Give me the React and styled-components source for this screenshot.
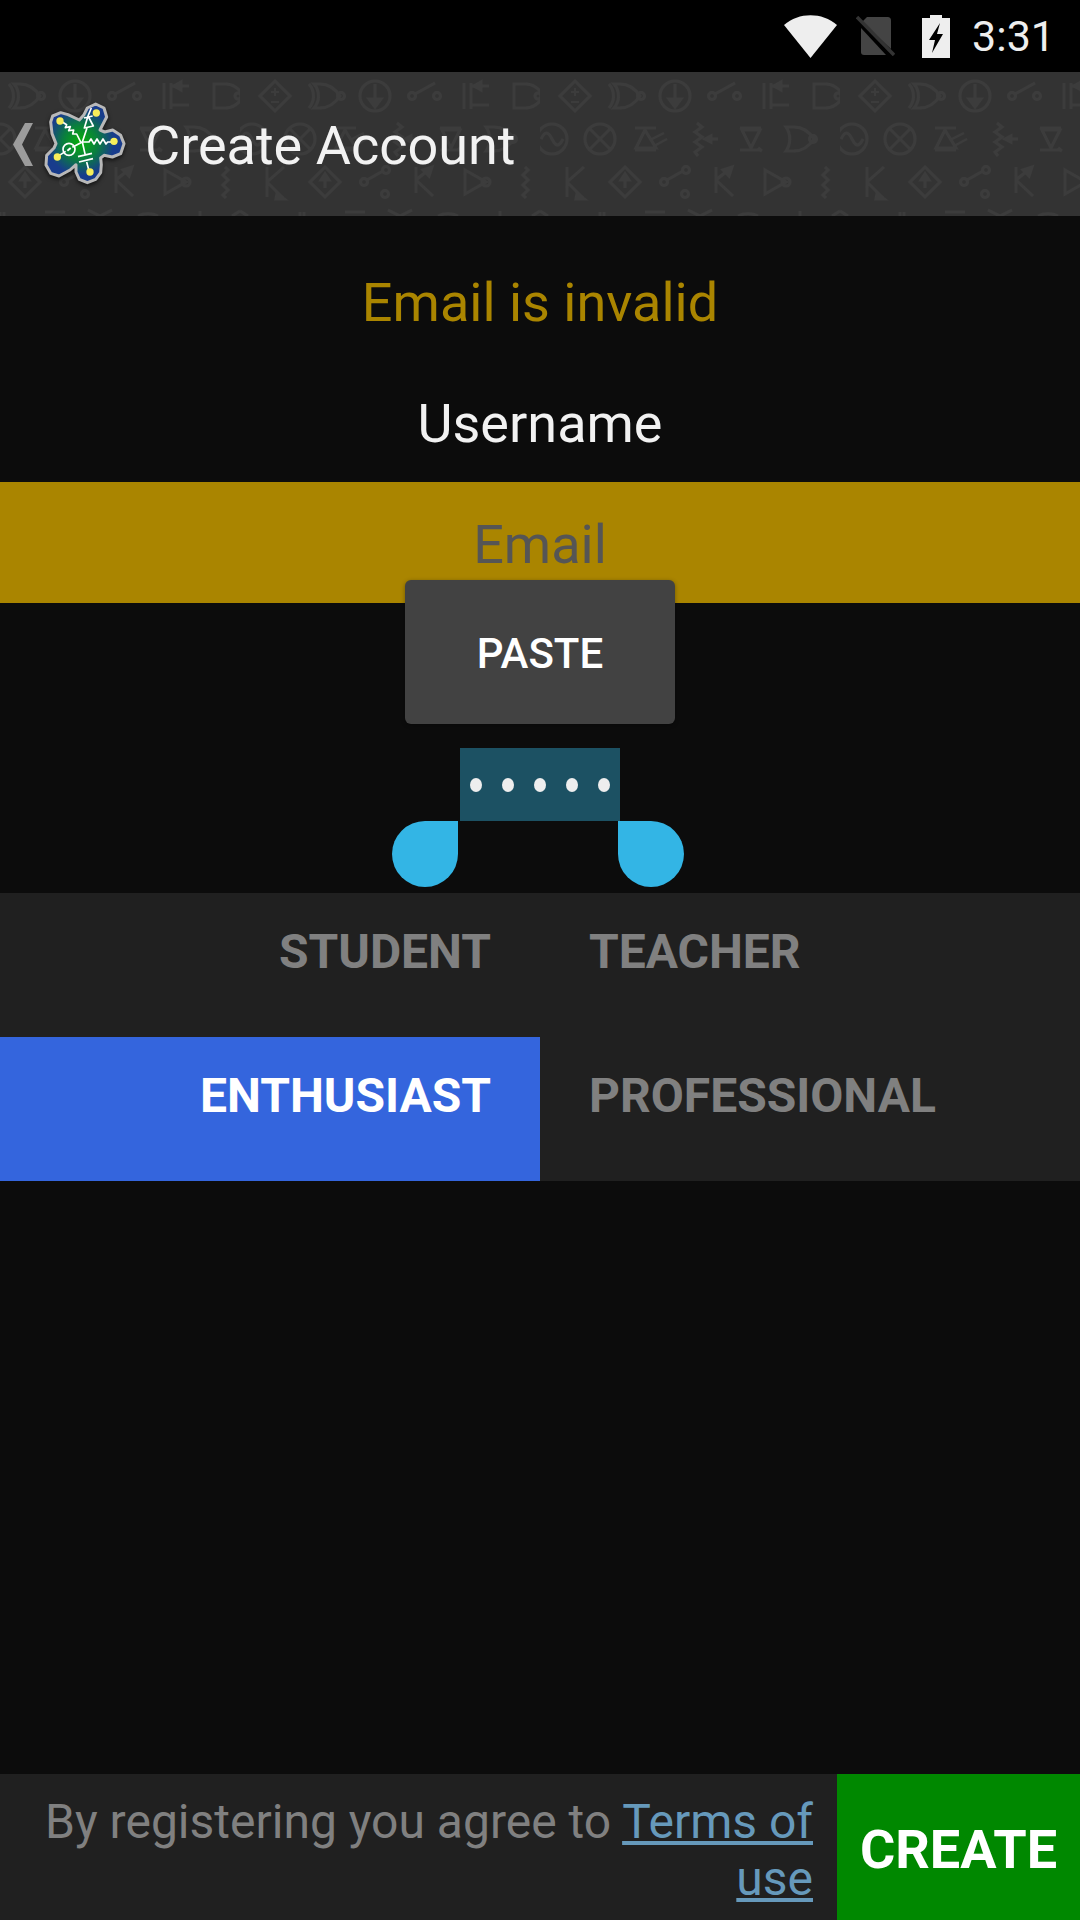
import React from "react";
import styled, { createGlobalStyle } from "styled-components";

const GlobalStyle = createGlobalStyle`
  html, body {
    margin: 0;
    padding: 0;
    background: #0c0c0c;
    font-family: Roboto, "Liberation Sans", sans-serif;
  }
`;

const Screen = styled.div`
  width: 1080px;
  height: 1920px;
  display: flex;
  flex-direction: column;
  overflow: hidden;
  background: #0c0c0c;
`;

const StatusBar = styled.div`
  height: 72px;
  flex: none;
  background: #000;
  display: flex;
  align-items: center;
  justify-content: flex-end;
  padding-right: 25px;
  color: #eee;
`;

const StatusIcon = styled.svg`
  display: block;
  flex: none;
  margin-right: ${(p) => p.$gap}px;
`;

const Clock = styled.span`
  font-size: 43px;
  line-height: 72px;
  color: #eee;
`;

const ToolBar = styled.div`
  position: relative;
  height: 144px;
  flex: none;
  background: #333;
  display: flex;
  align-items: center;
  padding-left: 13px;
  overflow: hidden;
`;

const Pattern = styled.svg`
  position: absolute;
  inset: 0;
`;

const Back = styled.svg`
  position: relative;
  flex: none;
`;

const Logo = styled.svg`
  position: relative;
  flex: none;
  margin-left: 11px;
  filter: drop-shadow(0 2px 2px rgba(0, 0, 0, 0.65));
`;

const Title = styled.h1`
  position: relative;
  margin: 3px 0 0 19px;
  font-size: 54px;
  font-weight: 400;
  color: #f2f2f2;
`;

const Form = styled.div`
  position: relative;
  flex: none;
  padding-bottom: 48px;
`;

const ErrorText = styled.div`
  height: 145px;
  box-sizing: border-box;
  padding-top: 57px;
  text-align: center;
  font-size: 54px;
  line-height: 60px;
  color: #aa8500;
`;

const Field = styled.div`
  height: 121px;
  box-sizing: border-box;
  padding-top: ${(p) => (p.$text ? 3 : 0)}px;
  display: flex;
  align-items: center;
  justify-content: center;
  font-size: 54px;
  color: ${(p) => (p.$invalid ? "#555" : "#f2f2f2")};
  background: ${(p) => (p.$invalid ? "#aa8500" : "transparent")};
`;

const Selection = styled.div`
  display: flex;
  gap: 20px;
  align-items: center;
  padding: 0 10px;
  height: 73px;
  background: #1c5163;
`;

const Dot = styled.span`
  width: 12px;
  height: 14px;
  border-radius: 50%;
  background: #eee;
`;

const PastePopup = styled.div`
  position: absolute;
  left: 405px;
  top: 364px;
  width: 270px;
  height: 144px;
  box-sizing: border-box;
  padding-top: 2px;
  display: flex;
  align-items: center;
  justify-content: center;
  border-radius: 6px;
  background: #424242;
  box-shadow: 0 1px 4px rgba(0, 0, 0, 0.35);
  color: #fff;
  font-size: 42px;
  font-weight: 500;
`;

const Handle = styled.div`
  position: absolute;
  top: 605px;
  left: ${(p) => (p.$right ? 618 : 392)}px;
  width: 66px;
  height: 66px;
  background: #33b5e5;
  border-radius: ${(p) => (p.$right ? "0 50% 50% 50%" : "50% 0 50% 50%")};
`;

const Levels = styled.div`
  flex: none;
  display: grid;
  grid-template-columns: 1fr 1fr;
  grid-auto-rows: 144px;
  background: #202020;
`;

const Level = styled.div`
  display: flex;
  align-items: center;
  justify-content: ${(p) => (p.$left ? "flex-end" : "flex-start")};
  padding: 0 49px 27px;
  font-size: 48px;
  font-weight: 700;
  color: ${(p) => (p.$active ? "#fff" : "#808080")};
  background: ${(p) => (p.$active ? "#3465dd" : "transparent")};
`;

const Spacer = styled.div`
  flex: 1;
`;

const Footer = styled.div`
  height: 146px;
  flex: none;
  display: flex;
  background: #202020;
`;

const Terms = styled.div`
  flex: 1;
  padding: 19px 24px 0 40px;
  text-align: right;
  font-size: 48px;
  line-height: 57px;
  color: #808080;
`;

const TermsLink = styled.a`
  color: #6699bb;
  text-decoration: underline;
`;

const CreateButton = styled.div`
  width: 243px;
  flex: none;
  box-sizing: border-box;
  padding-top: 4px;
  display: flex;
  align-items: center;
  justify-content: center;
  background: #008800;
  color: #fff;
  font-size: 54px;
  font-weight: 700;
`;

const ToolbarPattern = () => (
  <Pattern width="1080" height="144">
    <defs>
      <pattern id="circuits" patternUnits="userSpaceOnUse" x="540" y="0" width="300" height="144">
        <g fill="none" stroke="#3c3c3c" strokeWidth="3">
          {/* row 1 */}
          <path d="M35 9l15 15-15 15-15-15z" />
          <path d="M31 20h8M35 16v8M31 30h8" strokeWidth="2" />
          <path d="M69 12c6 7 6 17 0 24M74 12h6c10 0 16 6 20 12-4 6-10 12-20 12h-6c6-7 6-17 0-24z" />
          <circle cx="101" cy="24" r="3.5" />
          <circle cx="135" cy="24" r="15" />
          <path d="M135 12v22" />
          <path d="M129 27h12l-6 8z" fill="#3c3c3c" />
          <circle cx="172" cy="24" r="3.5" />
          <circle cx="197" cy="24" r="3.5" />
          <path d="M175 22l20-11" />
          <path d="M224 11v26M231 11v26M231 14h18M231 33h18M238 14h10" />
          <path d="M241 10l-7 4 7 4z" fill="#3c3c3c" />
          <path d="M274 12h12c9 0 14 6 18 12-4 6-9 12-18 12h-12z" />
          <circle cx="298" cy="24" r="3" />
          {/* row 2 */}
          <circle cx="12" cy="67" r="15" />
          <path d="M1 67c4-8 7-8 11 0s7 8 11 0" />
          <circle cx="60" cy="67" r="15" />
          <path d="M50 57l20 20M70 57l-20 20" />
          <path d="M95 56h21M95 78h21M105 58l-9 18h20z" />
          <path d="M110 68l14-7M114 74l13-7" strokeWidth="2" />
          <path d="M157 51l5 4-7 5 7 5-7 5 7 5-7 5 3 4" />
          <path d="M178 67h-12" />
          <path d="M165 67l6-3v6z" fill="#3c3c3c" />
          <path d="M200 56h21M200 78h21M202 58l9 18 9-18z" />
          <path d="M218 76l4 3" />
          <path d="M246 55h8c9 0 16 6 20 12-4 6-11 12-20 12h-8c5-7 5-17 0-24z" />
          <circle cx="273" cy="67" r="3.5" />
          {/* row 3 */}
          <path d="M27 95v30M27 110l17-15M27 110l16 16" />
          <path d="M37 122l7 5-8 0z" fill="#3c3c3c" />
          <path d="M85 95l15 15-15 15-15-15z" />
          <path d="M85 103v13" />
          <path d="M81 108l4-6 4 6z" fill="#3c3c3c" />
          <circle cx="124" cy="110" r="3.5" />
          <circle cx="146" cy="98" r="3.5" />
          <circle cx="145" cy="122" r="3.5" />
          <path d="M127 108l16-9" />
          <path d="M176 95v26M176 108l16-13M176 108l17 16" />
          <path d="M183 98l9-3-3 9z" fill="#3c3c3c" />
          <path d="M225 98l21 12-21 12z" />
          <circle cx="246" cy="110" r="4" />
          <path d="M285 95l3 3-5 5 5 5-5 5 5 5-5 5 3 3" />
          {/* row 4, cut by the bar */}
          <path d="M0 139l8 5M60 140v4M64 140v4M105 140h20M148 138l12 6M172 138l-12 6M198 144c6-3 14-3 20 0M260 139v5M300 139l-8 5" />
        </g>
      </pattern>
    </defs>
    <rect width="1080" height="144" fill="url(#circuits)" />
  </Pattern>
);

const AppLogo = () => (
  <Logo width="82" height="84" viewBox="130 40 246 252">
    <defs>
      <radialGradient id="board" gradientUnits="userSpaceOnUse" cx="240" cy="160" r="118">
        <stop offset="0" stopColor="#08b008" />
        <stop offset="0.45" stopColor="#0a7d40" />
        <stop offset="0.85" stopColor="#183c8c" />
      </radialGradient>
    </defs>
    <path
      d="M150 100L156 82L180 72L202 78L236 94L250 78L260 58L285 46L310 58L318 85L304 112L298 124L312 130L336 124L360 140L370 165L360 195L335 205L310 200L300 208L302 228L300 252L285 272L260 282L236 272L226 250L226 228L208 244L175 262L150 254L136 229L138 200L160 178L166 165L154 135Z"
      fill="url(#board)"
      stroke="#b8b8b8"
      strokeWidth="9"
      strokeLinejoin="round"
    />
    <g fill="none" stroke="#fff" strokeWidth="5" strokeLinejoin="round">
      <path d="M185 100l13 8-4 9 15-3-5 12 15-2-3 12 12 0 12 24" />
      <path d="M245 160l14-42M262 82l16 30-27 6zM250 88l26-6M272 58l-10 24" />
      <path d="M245 160l20 0 6-9 9 15 9-15 9 15 9-15 9 15 5-6 20 0" />
      <path d="M245 160l9 40M232 204l42-10M235 220l42-10M258 220l8 30" />
      <circle cx="205" cy="182" r="18" />
      <path d="M245 160l-30 16M195 188l-25 16" />
      <path d="M200 186l10-8" strokeWidth="6" />
    </g>
    <g fill="#f6ee5a">
      <circle cx="178" cy="97" r="11" />
      <circle cx="287" cy="73" r="11" />
      <circle cx="340" cy="158" r="11" />
      <circle cx="268" cy="250" r="11" />
      <circle cx="170" cy="205" r="11" />
    </g>
  </Logo>
);

export default function App() {
  return (
    <Screen>
      <GlobalStyle />
      <StatusBar>
        <StatusIcon $gap={19} width="53" height="43" viewBox="0 0 53 43">
          <path d="M0 10C15-3 38-3 53 10L26.5 43z" fill="#eee" />
        </StatusIcon>
        <StatusIcon $gap={27} width="39" height="40" viewBox="0 0 39 40">
          <path d="M11 1h20c3 0 4 1 4 4v28L6 6z" fill="#444" />
          <path d="M5 12l25 27H8c-2 0-3-1-3-3z" fill="#444" />
          <path d="M1 1l37 38" stroke="#333" strokeWidth="3.5" fill="none" />
        </StatusIcon>
        <StatusIcon $gap={22} width="28" height="43" viewBox="0 0 28 43">
          <path d="M8 0h12v3h8v40H0V3h8z" fill="#eee" />
          <path d="M18 8L7 25h6l-3 13 11-19h-6z" fill="#000" />
        </StatusIcon>
        <Clock>3:31</Clock>
      </StatusBar>
      <ToolBar>
        <ToolbarPattern />
        <Back width="20" height="43" viewBox="0 0 20 43">
          <path d="M12 0h8L9 21.5 20 43h-8L0 21.5z" fill="#9c9c9c" />
        </Back>
        <AppLogo />
        <Title>Create Account</Title>
      </ToolBar>
      <Form>
        <ErrorText>Email is invalid</ErrorText>
        <Field $text>Username</Field>
        <Field $text $invalid>
          Email
        </Field>
        <Field />
        <Field>
          <Selection>
            <Dot />
            <Dot />
            <Dot />
            <Dot />
            <Dot />
          </Selection>
        </Field>
        <PastePopup>PASTE</PastePopup>
        <Handle />
        <Handle $right />
      </Form>
      <Levels>
        <Level $left>STUDENT</Level>
        <Level>TEACHER</Level>
        <Level $left $active>
          ENTHUSIAST
        </Level>
        <Level>PROFESSIONAL</Level>
      </Levels>
      <Spacer />
      <Footer>
        <Terms>
          By registering you agree to <TermsLink>Terms of use</TermsLink>
        </Terms>
        <CreateButton>CREATE</CreateButton>
      </Footer>
    </Screen>
  );
}
